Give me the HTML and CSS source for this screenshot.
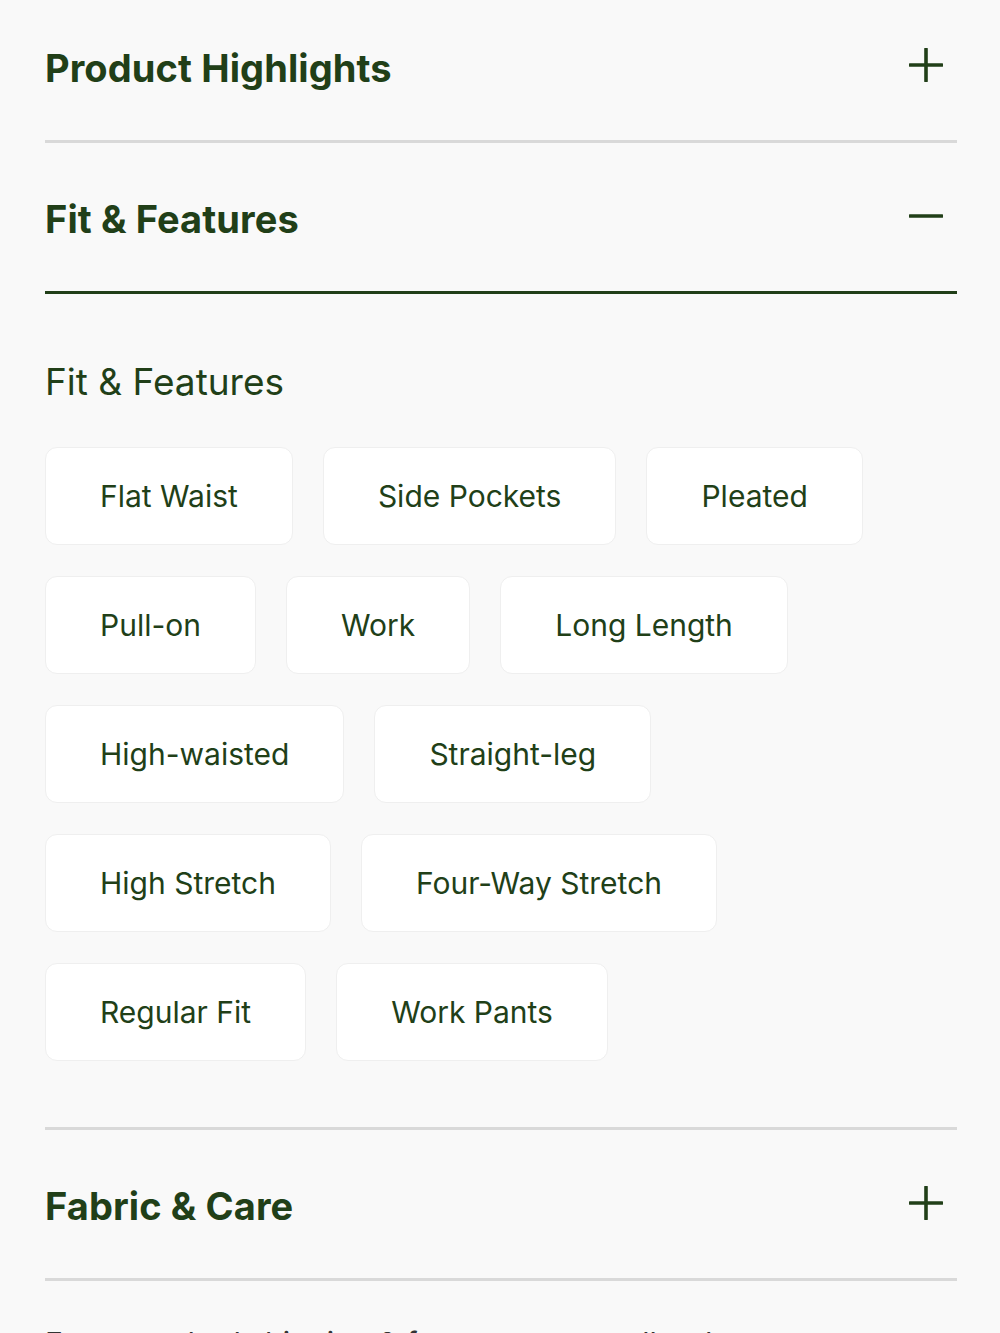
FILE: index.html
```html
<!DOCTYPE html>
<html lang="en">
<head>
<meta charset="utf-8">
<title>Fit & Features</title>
<link rel="stylesheet" href="styles.css">
</head>
<body>
<div class="page">
  <div class="accordion">
    <div class="acc-head">
      <h2 class="acc-title">Product Highlights</h2>
      <svg class="acc-icon" viewBox="0 0 36 36"><path d="M18 1V35M1 18H35"/></svg>
    </div>
    <div class="acc-head acc-head--open">
      <h2 class="acc-title">Fit &amp; Features</h2>
      <svg class="acc-icon" viewBox="0 0 36 36"><path d="M1 18H35"/></svg>
    </div>
    <div class="acc-panel">
      <h3 class="panel-title">Fit &amp; Features</h3>
      <div class="chips">
        <span class="chip">Flat Waist</span>
        <span class="chip">Side Pockets</span>
        <span class="chip">Pleated</span>
        <span class="chip">Pull-on</span>
        <span class="chip">Work</span>
        <span class="chip">Long Length</span>
        <span class="chip">High-waisted</span>
        <span class="chip">Straight-leg</span>
        <span class="chip">High Stretch</span>
        <span class="chip">Four-Way Stretch</span>
        <span class="chip">Regular Fit</span>
        <span class="chip">Work Pants</span>
      </div>
    </div>
    <div class="acc-head">
      <h2 class="acc-title">Fabric &amp; Care</h2>
      <svg class="acc-icon" viewBox="0 0 36 36"><path d="M18 1V35M1 18H35"/></svg>
    </div>
    <p class="note">Free standard shipping &amp; free returns on all orders</p>
  </div>
</div>
</body>
</html>
```
FILE: styles.css
```css
html, body {
  margin: 0;
  padding: 0;
  background: #f9f9f9;
}
body {
  font-family: Inter, "Noto Sans", sans-serif;
  color: #213f18;
  height: 1333px;
  overflow: hidden;
}
.page {
  padding: 0 43px 0 45px;
}
.accordion {
  margin-top: -8px;
}
.acc-head {
  box-sizing: border-box;
  height: 151px;
  padding-top: 4px;
  display: flex;
  align-items: center;
  justify-content: space-between;
  border-bottom: 3px solid #d9d9d9;
}
.acc-head--open {
  border-bottom-color: #213f18;
}
.acc-title {
  margin: 0;
  font-size: 38px;
  font-weight: 700;
  letter-spacing: 0.1px;
}
.acc-icon {
  width: 34px;
  height: 34px;
  margin: 0 14px 6px 0;
  fill: none;
  stroke: #213f18;
  stroke-width: 3.8;
  stroke-linecap: round;
}
.acc-panel {
  padding: 66px 0 66px;
  border-bottom: 3px solid #d9d9d9;
}
.panel-title {
  margin: 0 0 43px;
  font-size: 37px;
  font-weight: 400;
  line-height: 1.2;
}
.chips {
  display: flex;
  flex-wrap: wrap;
  gap: 31px 30px;
  width: 840px;
}
.chip {
  background: #fff;
  border: 1px solid #efefef;
  border-radius: 12px;
  padding: 30px 54px;
  font-size: 30px;
  line-height: 36px;
}
.note {
  margin: 44px 0 0;
  font-size: 30px;
  line-height: 36px;
  color: #333;
}
```
